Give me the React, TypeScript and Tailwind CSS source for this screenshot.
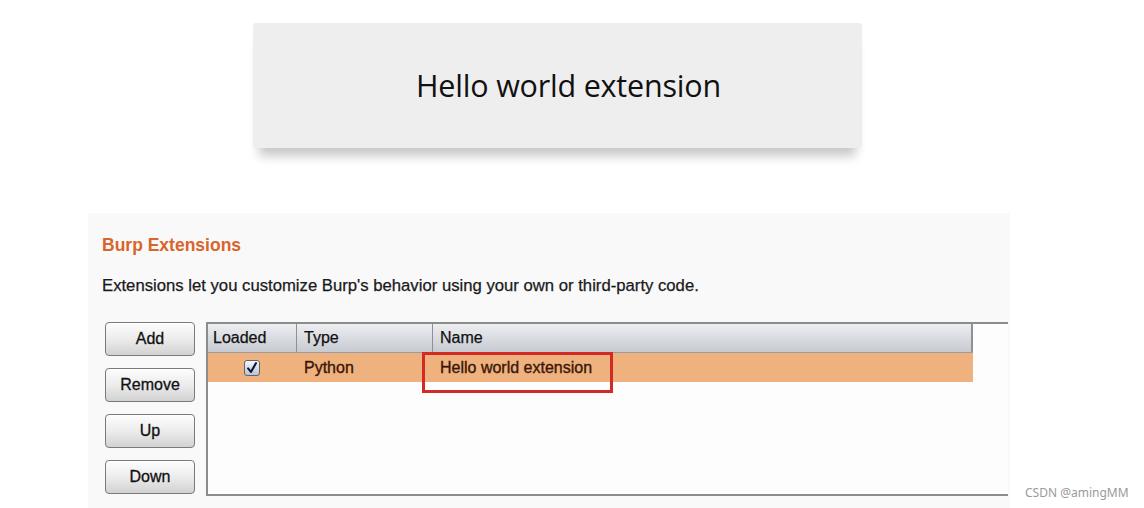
const buttons = ["Add", "Remove", "Up", "Down"];

const CheckBox = () => (
  <span className="inline-flex items-center justify-center w-[16px] h-[16px] rounded-[3px] border border-[#5b6470] bg-gradient-to-b from-[#f4f6fa] to-[#b9c3d2]">
    <svg viewBox="0 0 16 16" className="w-[14px] h-[14px]" aria-hidden="true">
      <path d="M3.5 8.5 L6.8 12.5 L12.5 2.5" fill="none" stroke="#0b1630" strokeWidth="2.4" strokeLinecap="round" strokeLinejoin="round" />
    </svg>
  </span>
);

export default function App() {
  return (
    <div className="w-[1144px] h-[508px] bg-white overflow-hidden relative" style={{ fontFamily: '"Liberation Sans", Arial, sans-serif' }}>
      <div className="ml-[253px] mt-[23px] w-[609px] h-[125px] rounded-[3px] bg-[#eeeeee] flex items-center justify-center pl-[22px] shadow-[0_14px_10px_-6px_rgba(0,0,0,0.22)]">
        <span className="text-[30.5px] text-[#111] tracking-[-0.2px]" style={{ fontFamily: '"Open Sans", "Noto Sans", sans-serif' }}>
          Hello world extension
        </span>
      </div>

      <div className="ml-[88px] mt-[65px] w-[922px] h-[295px] bg-[#f9f9fa] pt-[22px]">
        <h2 className="ml-[14px] text-[17.5px] leading-[20px] font-bold text-[#d9642c]">Burp Extensions</h2>
        <p className="ml-[14px] mt-[22px] text-[16.7px] leading-[18px] text-[#1a1a1a] [-webkit-text-stroke:0.25px_#1a1a1a]">
          Extensions let you customize Burp's behavior using your own or third-party code.
        </p>

        <div className="flex mt-[27px]">
          <div className="ml-[17px] flex flex-col gap-[12px]">
            {buttons.map((b) => (
              <button
                key={b}
                type="button"
                className="w-[90px] h-[34px] rounded-[4px] border border-[#7a7a7a] bg-gradient-to-b from-[#fdfdfd] via-[#ececec] to-[#d2d2d2] text-[16px] text-[#111] shadow-[inset_0_1px_0_#fff] [-webkit-text-stroke:0.3px_#111]"
              >
                {b}
              </button>
            ))}
          </div>

          <div className="relative ml-[11px] w-[802px] h-[174px] border-l-2 border-t-2 border-b-2 border-[#8c8c8c] bg-[#fdfdfe]">
            <div className="flex w-[765px] h-[29px] bg-gradient-to-b from-[#eceef1] to-[#c7cad1] border-b border-[#9a9ca2] text-[16px] text-[#111] [-webkit-text-stroke:0.25px_#111]">
              <div className="w-[89px] border-r border-[#8e9096] pl-[5px] flex items-center">Loaded</div>
              <div className="w-[136px] border-r border-[#8e9096] pl-[7px] flex items-center">Type</div>
              <div className="flex-1 border-r-2 border-[#8e9096] pl-[7px] flex items-center">Name</div>
            </div>
            <div className="flex w-[765px] h-[29px] bg-[#efb27f] text-[16px] text-[#3a1608] [-webkit-text-stroke:0.35px_#3a1608]">
              <div className="w-[89px] flex items-center justify-center pr-[2px]">
                <CheckBox />
              </div>
              <div className="w-[136px] pl-[7px] flex items-center">Python</div>
              <div className="flex-1 pl-[7px] flex items-center">Hello world extension</div>
            </div>
            <div className="absolute left-[214px] top-[28px] w-[191px] h-[41px] border-[3px] border-[#d42a25]" />
          </div>
        </div>
      </div>

      <span className="absolute left-[1025px] top-[484px] text-[12px] text-[#9a9a9a]" style={{ fontFamily: '"Noto Sans", sans-serif' }}>
        CSDN @amingMM
      </span>
    </div>
  );
}
